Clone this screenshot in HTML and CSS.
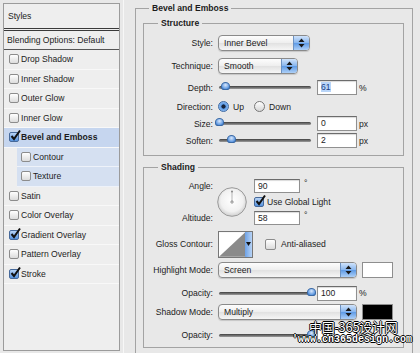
FILE: index.html
```html
<!DOCTYPE html>
<html lang="en">
<head>
    <meta charset="UTF-8">
    <meta name="viewport" content="width=device-width, initial-scale=1.0">
    <title>Layer Style</title>
    <link rel="stylesheet" href="styles.css">
</head>
<body>
<div class="dialog">
    <!-- Styles list -->
    <aside class="styles-list">
        <div class="list-head">Styles</div>
        <div class="list-blend">Blending Options: Default</div>
        <div class="list-item"><span class="check"></span>Drop Shadow</div>
        <div class="list-item"><span class="check"></span>Inner Shadow</div>
        <div class="list-item"><span class="check"></span>Outer Glow</div>
        <div class="list-item"><span class="check"></span>Inner Glow</div>
        <div class="list-item selected"><span class="check on"><svg viewBox="0 0 12 12" width="12" height="12"><path d="M2.5 6 L5 9 L11 0.5" fill="none" stroke="#111" stroke-width="2"/></svg></span>Bevel and Emboss</div>
        <div class="list-item sub"><span class="check"></span>Contour</div>
        <div class="list-item sub"><span class="check"></span>Texture</div>
        <div class="list-item"><span class="check"></span>Satin</div>
        <div class="list-item"><span class="check"></span>Color Overlay</div>
        <div class="list-item"><span class="check on"><svg viewBox="0 0 12 12" width="12" height="12"><path d="M2.5 6 L5 9 L11 0.5" fill="none" stroke="#111" stroke-width="2"/></svg></span>Gradient Overlay</div>
        <div class="list-item"><span class="check"></span>Pattern Overlay</div>
        <div class="list-item"><span class="check on"><svg viewBox="0 0 12 12" width="12" height="12"><path d="M2.5 6 L5 9 L11 0.5" fill="none" stroke="#111" stroke-width="2"/></svg></span>Stroke</div>
    </aside>

    <!-- Settings -->
    <main class="panel">
        <fieldset class="group outer">
            <legend>Bevel and Emboss</legend>

            <fieldset class="group structure">
                <legend>Structure</legend>

                <div class="row h23">
                    <span class="label">Style:</span>
                    <div class="select w-style">
                        <span class="select-text">Inner Bevel</span>
                        <span class="select-arrow"><svg viewBox="0 0 7 10" width="7" height="10"><path d="M3.5 0.5 L6.5 4 L0.5 4 Z M3.5 9.5 L6.5 6 L0.5 6 Z" fill="#1a1a1a"/></svg></span>
                    </div>
                </div>
                <div class="row h23">
                    <span class="label">Technique:</span>
                    <div class="select w-tech">
                        <span class="select-text">Smooth</span>
                        <span class="select-arrow"><svg viewBox="0 0 7 10" width="7" height="10"><path d="M3.5 0.5 L6.5 4 L0.5 4 Z M3.5 9.5 L6.5 6 L0.5 6 Z" fill="#1a1a1a"/></svg></span>
                    </div>
                </div>
                <div class="row h21">
                    <span class="label">Depth:</span>
                    <div class="control">
                        <div class="slider"><span class="thumb" style="left: 6.1%"></span></div>
                        <div class="field"><span class="picked">61</span></div>
                        <span class="unit">%</span>
                    </div>
                </div>
                <div class="row h17">
                    <span class="label">Direction:</span>
                    <div class="control radios">
                        <span class="radio on"></span><span class="radio-text">Up</span>
                        <span class="radio"></span><span>Down</span>
                    </div>
                </div>
                <div class="row h17">
                    <span class="label">Size:</span>
                    <div class="control">
                        <div class="slider"><span class="thumb" style="left: 0%"></span></div>
                        <div class="field">0</div>
                        <span class="unit">px</span>
                    </div>
                </div>
                <div class="row h17">
                    <span class="label">Soften:</span>
                    <div class="control">
                        <div class="slider"><span class="thumb" style="left: 12.5%"></span></div>
                        <div class="field">2</div>
                        <span class="unit">px</span>
                    </div>
                </div>
            </fieldset>

            <fieldset class="group shading">
                <legend>Shading</legend>

                <div class="angle-block">
                    <span class="label">Angle:</span>
                    <div class="dial">
                        <svg viewBox="0 0 30 30" width="30" height="30">
                            <defs>
                                <radialGradient id="dialFill" cx="50%" cy="45%" r="55%">
                                    <stop offset="0" stop-color="#ffffff"/>
                                    <stop offset="0.7" stop-color="#f1f1f1"/>
                                    <stop offset="1" stop-color="#cfcfcf"/>
                                </radialGradient>
                            </defs>
                            <circle cx="15" cy="15" r="14.3" fill="url(#dialFill)" stroke="#9a9a9a"/>
                            <line x1="15" y1="15" x2="15" y2="4" stroke="#b5b5b5"/>
                            <path d="M13 15 H17 M15 13 V17" stroke="#888" stroke-width="0.8"/>
                            <circle cx="15" cy="4.5" r="1" fill="#888"/>
                        </svg>
                    </div>
                    <div class="control fields">
                        <div class="field wide">90</div>
                        <span class="unit">°</span>
                    </div>
                    <div class="control fields">
                        <span class="check on"><svg viewBox="0 0 12 12" width="12" height="12"><path d="M2.5 6 L5 9 L11 0.5" fill="none" stroke="#111" stroke-width="2"/></svg></span>
                        <span class="check-text">Use Global Light</span>
                    </div>
                    <span class="label">Altitude:</span>
                    <div class="control fields">
                        <div class="field wide">58</div>
                        <span class="unit">°</span>
                    </div>
                </div>

                <div class="row h28 mt5">
                    <span class="label">Gloss Contour:</span>
                    <div class="control">
                        <div class="contour">
                            <svg viewBox="0 0 27 25" width="27" height="25">
                                <rect width="27" height="25" fill="#fff"/>
                                <path d="M0 25 L27 0 L27 25 Z" fill="#8a8a8a"/>
                            </svg>
                            <span class="contour-arrow"><svg viewBox="0 0 5 4" width="5" height="4"><path d="M0 0 H5 L2.5 4 Z" fill="#111"/></svg></span>
                        </div>
                        <span class="check anti"></span>
                        <span>Anti-aliased</span>
                    </div>
                </div>

                <div class="row h16 mt4">
                    <span class="label">Highlight Mode:</span>
                    <div class="control">
                        <div class="select w-mode">
                            <span class="select-text">Screen</span>
                            <span class="select-arrow"><svg viewBox="0 0 7 10" width="7" height="10"><path d="M3.5 0.5 L6.5 4 L0.5 4 Z M3.5 9.5 L6.5 6 L0.5 6 Z" fill="#1a1a1a"/></svg></span>
                        </div>
                        <span class="swatch white"></span>
                    </div>
                </div>
                <div class="row h16 mt7">
                    <span class="label">Opacity:</span>
                    <div class="control">
                        <div class="slider"><span class="thumb" style="left: 100%"></span></div>
                        <div class="field">100</div>
                        <span class="unit">%</span>
                    </div>
                </div>
                <div class="row h16 mt3">
                    <span class="label">Shadow Mode:</span>
                    <div class="control">
                        <div class="select w-mode">
                            <span class="select-text">Multiply</span>
                            <span class="select-arrow"><svg viewBox="0 0 7 10" width="7" height="10"><path d="M3.5 0.5 L6.5 4 L0.5 4 Z M3.5 9.5 L6.5 6 L0.5 6 Z" fill="#1a1a1a"/></svg></span>
                        </div>
                        <span class="swatch black"></span>
                    </div>
                </div>
                <div class="row h16 mt7">
                    <span class="label">Opacity:</span>
                    <div class="control">
                        <div class="slider"><span class="thumb" style="left: 100%"></span></div>
                        <div class="field">100</div>
                        <span class="unit">%</span>
                    </div>
                </div>
            </fieldset>
        </fieldset>
    </main>

    <!-- watermark over the corner -->
    <div class="watermark">
        <div class="wm-cn">中国-365设计网</div>
        <div class="wm-url">'www.cn365design.com</div>
    </div>
</div>
</body>
</html>
```

FILE: styles.css
```css
body {
    margin: 0;
    font-family: "Liberation Sans", Arial, sans-serif;
    font-size: 8.6px;
    color: #1c1c1c;
    background-color: #e8e8e8;
}

.dialog {
    position: relative;
    display: flex;
    width: 420px;
    height: 353px;
    overflow: hidden;
}

/* styles list */
.styles-list {
    box-sizing: border-box;
    width: 117px;
    height: 348px;
    margin: 3px 0 0 3px;
    border: 1px solid #9b9b9b;
    background-color: #eeeeee;
    display: flex;
    flex-direction: column;
    flex-shrink: 0;
}

.list-head {
    box-sizing: border-box;
    height: 27px;
    padding-left: 4px;
    display: flex;
    align-items: center;
    border-bottom: 3px double #3a3a3a;
}

.list-blend {
    box-sizing: border-box;
    height: 19px;
    padding-left: 3px;
    display: flex;
    align-items: center;
    border-bottom: 1px solid #555;
}

.list-item {
    box-sizing: border-box;
    height: 19.5px;
    padding-left: 5px;
    display: flex;
    align-items: center;
    gap: 2px;
    border-bottom: 1px solid #f8f8f8;
}

.list-item.selected {
    background-color: #c6d6ef;
    font-weight: bold;
}

.list-item.sub {
    margin-left: 13px;
    padding-left: 4px;
    background-color: #d5e0f1;
    border-bottom-color: #eef2f9;
}

.check {
    position: relative;
    box-sizing: border-box;
    width: 10px;
    height: 10px;
    border: 1px solid #8c8c8c;
    border-radius: 2px;
    background: linear-gradient(#ffffff, #dcdcdc);
    flex-shrink: 0;
}

.check.on {
    border-color: #46699a;
    background: linear-gradient(#b8d4f6, #5592de);
}

.check svg {
    position: absolute;
    left: -1px;
    top: -3px;
    overflow: visible;
}

/* settings panel */
.panel {
    margin-left: 3px;
    border-left: 1px solid #f7f7f7;
    padding: 2px 0 0 11px;
}

.group {
    box-sizing: border-box;
    min-width: 0;
    margin: 0;
    border: 1px solid #a3a3a3;
}

.group legend {
    font-weight: bold;
    line-height: 12px;
    padding: 0 3px;
}

.outer {
    width: 278px;
    padding: 3px 0 20px 7px;
}

.outer > legend {
    margin-left: 6px;
}

.structure,
.shading {
    width: 261px;
}

.structure legend,
.shading legend {
    margin-left: 14px;
}

.structure {
    padding: 2px 0 6px 0;
    margin-bottom: 5px;
}

.shading {
    padding: 5px 0 4px 0;
}

.row {
    display: grid;
    grid-template-columns: 69px auto;
    column-gap: 5px;
    align-items: center;
}

.h23 { height: 23px; }
.h21 { height: 21px; }
.h17 { height: 17px; }
.h16 { height: 16px; }
.h28 { height: 28px; }
.mt3 { margin-top: 3px; }
.mt4 { margin-top: 4px; }
.mt5 { margin-top: 5px; }
.mt7 { margin-top: 7px; }

.label {
    text-align: right;
    white-space: nowrap;
}

.control {
    display: flex;
    align-items: center;
}

/* popup menus */
.select {
    box-sizing: border-box;
    height: 16px;
    display: flex;
    align-items: center;
    border: 1px solid #8a8a8a;
    border-radius: 4px;
    background: linear-gradient(#fdfdfd, #eeeeee 50%, #e1e1e1 51%, #f6f6f6);
    box-shadow: 0 1px 1px rgba(0, 0, 0, 0.15);
    overflow: hidden;
}

.w-style { width: 92px; }
.w-tech { width: 80px; }
.w-mode { width: 139px; }

.select-text {
    flex: 1;
    padding-left: 5px;
}

.select-arrow {
    width: 15px;
    height: 100%;
    display: flex;
    align-items: center;
    justify-content: center;
    border-left: 1px solid #6d92c2;
    background: linear-gradient(#d0e3fb, #86b5ee 50%, #5d9ae6 51%, #aed0f7);
}

/* sliders and fields */
.slider {
    position: relative;
    width: 92px;
    height: 3px;
    margin-left: 1px;
    border-radius: 2px;
    background: linear-gradient(#3f3f3f, #9d9d9d);
}

.thumb {
    position: absolute;
    top: -4px;
    box-sizing: border-box;
    width: 9px;
    height: 8px;
    margin-left: -4px;
    border: 1px solid #3b6aa6;
    border-radius: 50% 50% 35% 35%;
    background: radial-gradient(circle at 50% 35%, #dbe9fc, #5a95df 75%);
}

.field {
    box-sizing: border-box;
    width: 40px;
    height: 15px;
    margin-left: 6px;
    padding-left: 3px;
    line-height: 13px;
    border: 1px solid #909090;
    border-top-color: #6c6c6c;
    background-color: #ffffff;
    box-shadow: inset 0 1px 1px rgba(0, 0, 0, 0.15);
}

.field.wide {
    width: 46px;
    height: 14px;
    margin-left: 0;
    line-height: 12px;
}

.picked {
    background-color: #b9d5f8;
    color: #1b3f86;
}

.unit {
    margin-left: 2px;
}

.fields .unit {
    align-self: flex-start;
    margin-left: 2px;
    line-height: 8px;
}

/* radio buttons */
.radios {
    padding-left: 0;
}

.radio {
    box-sizing: border-box;
    width: 11px;
    height: 11px;
    margin-right: 4px;
    border: 1px solid #777;
    border-radius: 50%;
    background: linear-gradient(#ffffff, #d6d6d6);
}

.radio.on {
    border-color: #3e6aa3;
    background: radial-gradient(circle, #17243b 0 1.8px, #5b9be7 2.4px, #b0d0f6);
}

.radio-text {
    margin-right: 10px;
}

/* angle dial */
.angle-block {
    display: grid;
    grid-template-columns: 69px 34px auto;
    grid-template-rows: 15px 15px 15px;
    row-gap: 1px;
    align-items: center;
}

.angle-block .label:first-child {
    grid-column: 1;
    grid-row: 1;
}

.angle-block .label {
    grid-column: 1;
    grid-row: 3;
}

.dial {
    grid-column: 2;
    grid-row: 1 / 4;
    justify-self: end;
    width: 30px;
    height: 30px;
}

.fields {
    grid-column: 3;
    margin-left: 7px;
    gap: 2px;
}

.check-text {
    margin-left: 1px;
}

/* contour picker */
.contour {
    box-sizing: border-box;
    display: flex;
    width: 35px;
    height: 27px;
    border: 1px solid #777;
}

.contour-arrow {
    width: 7px;
    display: flex;
    align-items: center;
    justify-content: center;
    background: linear-gradient(90deg, #6ea2e6, #b7d3f6);
}

.check.anti {
    width: 11px;
    height: 11px;
    margin: 0 5px 0 12px;
}

.swatch {
    box-sizing: border-box;
    width: 31px;
    height: 16px;
    margin-left: 5px;
    border: 1px solid #8e8e8e;
}

.swatch.white { background-color: #ffffff; }
.swatch.black { background-color: #000000; }

/* watermark */
.watermark {
    position: absolute;
    left: 292px;
    top: 319px;
    color: #ffffff;
    text-shadow: 1px 0 0 #000, -1px 0 0 #000, 0 1px 0 #000, 0 -1px 0 #000;
}

.wm-cn {
    margin-left: 17px;
    font-family: "Noto Sans CJK SC", sans-serif;
    font-size: 13px;
    line-height: 15px;
    letter-spacing: -0.3px;
}

.wm-url {
    font-family: "Liberation Mono", monospace;
    font-size: 10px;
    font-weight: bold;
    line-height: 11px;
}
```
